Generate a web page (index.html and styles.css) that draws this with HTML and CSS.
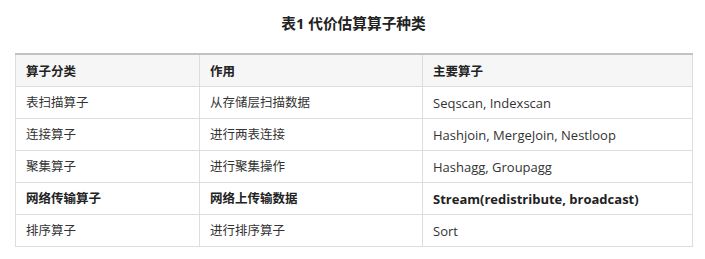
FILE: index.html
```html
<!DOCTYPE html>
<html lang="zh-CN">
<head>
<meta charset="utf-8">
<title>表1 代价估算算子种类</title>
<link rel="stylesheet" href="styles.css">
</head>
<body>
<div class="page">
  <div class="caption">表1 代价估算算子种类</div>
  <table class="ops">
    <colgroup>
      <col class="c1"><col class="c2"><col class="c3">
    </colgroup>
    <thead>
      <tr><th>算子分类</th><th>作用</th><th>主要算子</th></tr>
    </thead>
    <tbody>
      <tr><td>表扫描算子</td><td>从存储层扫描数据</td><td class="latin">Seqscan, Indexscan</td></tr>
      <tr><td>连接算子</td><td>进行两表连接</td><td class="latin">Hashjoin, MergeJoin, Nestloop</td></tr>
      <tr><td>聚集算子</td><td>进行聚集操作</td><td class="latin">Hashagg, Groupagg</td></tr>
      <tr class="strong"><td>网络传输算子</td><td>网络上传输数据</td><td class="latin">Stream(redistribute, broadcast)</td></tr>
      <tr><td>排序算子</td><td>进行排序算子</td><td class="latin">Sort</td></tr>
    </tbody>
  </table>
</div>
</body>
</html>
```
FILE: styles.css
```css
html, body {
  margin: 0;
  padding: 0;
  background: #fff;
}
body {
  font-family: "Open Sans", "Noto Sans CJK SC", sans-serif;
  color: #333;
}
.page {
  width: 705px;
  padding: 0 0 0 15px;
  box-sizing: border-box;
}
.caption {
  width: 677px;
  text-align: center;
  font-size: 14.7px;
  font-weight: bold;
  line-height: 20px;
  padding-top: 13px;
  height: 40px;
  color: #222;
}
.ops {
  width: 677px;
  border-collapse: collapse;
  table-layout: fixed;
  font-size: 12.5px;
}
.ops .c1 { width: 184px; }
.ops .c2 { width: 223px; }
.ops .c3 { width: 270px; }
.ops th, .ops td {
  border: 1px solid #ddd;
  padding: 1px 10px 0;
  height: 30px;
  text-align: left;
  vertical-align: middle;
  line-height: 16px;
}
.ops th {
  padding-top: 3px;
  height: 28px;
}
.ops td.latin {
  font-size: 13px;
}
.ops thead tr {
  border-top: 2px solid #c2c2c2;
}
.ops th {
  background: #f6f6f6;
  font-weight: bold;
  color: #222;
}
.ops .strong td {
  font-weight: bold;
  color: #222;
}
```
